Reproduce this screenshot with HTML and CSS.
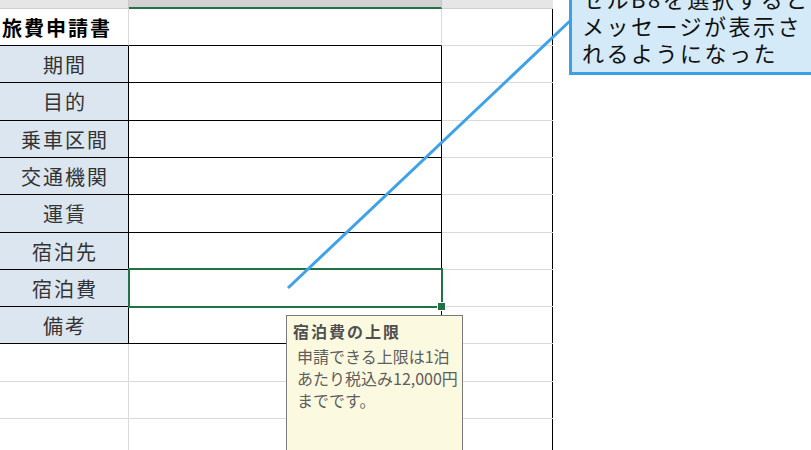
FILE: index.html
```html
<!DOCTYPE html>
<html lang="ja">
<head>
<meta charset="utf-8">
<title>旅費申請書</title>
<link rel="stylesheet" href="styles.css">
</head>
<body>
<div class="page">
  <div class="sheet">
    <div class="hdr h-a"></div><div class="hdr h-b"></div><div class="hdr h-c"></div>

    <div class="cell title">旅費申請書</div><div class="cell top-b"></div><div class="cell gc"></div>
    <div class="cell lbl">期間</div><div class="cell val"></div><div class="cell gc"></div>
    <div class="cell lbl">目的</div><div class="cell val"></div><div class="cell gc"></div>
    <div class="cell lbl">乗車区間</div><div class="cell val"></div><div class="cell gc"></div>
    <div class="cell lbl">交通機関</div><div class="cell val"></div><div class="cell gc"></div>
    <div class="cell lbl">運賃</div><div class="cell val"></div><div class="cell gc"></div>
    <div class="cell lbl">宿泊先</div><div class="cell val"></div><div class="cell gc"></div>
    <div class="cell lbl">宿泊費</div><div class="cell val"></div><div class="cell gc"></div>
    <div class="cell lbl">備考</div><div class="cell val"></div><div class="cell gc"></div>
    <div class="cell"></div><div class="cell"></div><div class="cell gc"></div>
    <div class="cell"></div><div class="cell"></div><div class="cell gc"></div>
    <div class="cell"></div><div class="cell"></div><div class="cell gc"></div>
  </div>

  <div class="selection"></div>
  <div class="handle"></div>

  <svg class="pointer" width="811" height="450" viewBox="0 0 811 450" xmlns="http://www.w3.org/2000/svg">
    <line x1="288" y1="288" x2="572" y2="19" stroke="#3fa2e8" stroke-width="3"/>
  </svg>

  <div class="callout">
    <div>セルB8を選択すると</div>
    <div>メッセージが表示さ</div>
    <div>れるようになった</div>
  </div>

  <div class="tip">
    <div class="tip-title">宿泊費の上限</div>
    <div class="tip-body">
      <div>申請できる上限は1泊</div>
      <div>あたり税込み12,000円</div>
      <div>までです。</div>
    </div>
  </div>
</div>
</body>
</html>
```

FILE: styles.css
```css
html, body {
  margin: 0;
  padding: 0;
  background: #ffffff;
}

body {
  font-family: "Noto Sans CJK JP", "Noto Sans", sans-serif;
  width: 811px;
  height: 450px;
  overflow: hidden;
}

.page {
  position: relative;
  width: 811px;
  height: 450px;
  overflow: hidden;
}

.sheet {
  display: grid;
  grid-template-columns: 129px 313px 111px;
  grid-template-rows: 9px 37px 37px 38px 37px 37px 38px 37px 37px 37px 38px 37px 37px;
  width: 553px;
  box-sizing: border-box;
  border-right: 1px solid #000000;
}

.hdr {
  box-sizing: border-box;
  border-right: 1px solid #c6c6c6;
  border-bottom: 1px solid #cfcfcf;
  background: #e6e6e6;
}

.h-b {
  background: #d2d2d2;
  border-bottom: 2px solid #217346;
}

.h-c {
  border-right: none;
}

.cell {
  box-sizing: border-box;
  border-right: 1px solid #dadada;
  border-bottom: 1px solid #dadada;
  font-size: 20px;
  color: #333333;
  display: flex;
  align-items: center;
}

.gc {
  border-right: none;
}

.title {
  font-weight: bold;
  color: #000000;
  letter-spacing: 2px;
  padding-left: 2px;
  border-bottom-color: #000000;
  white-space: nowrap;
}

.top-b {
  border-bottom-color: #000000;
}

.lbl {
  background: #dce6f1;
  border-right-color: #000000;
  border-bottom-color: #000000;
  justify-content: center;
  letter-spacing: 2px;
  padding-left: 2px;
}

.val {
  border-right-color: #000000;
  border-bottom-color: #000000;
}

.selection {
  position: absolute;
  left: 128px;
  top: 268px;
  width: 315px;
  height: 40px;
  box-sizing: border-box;
  border: 2px solid #217346;
}

.handle {
  position: absolute;
  left: 437px;
  top: 302px;
  width: 7px;
  height: 7px;
  background: #217346;
  border: 1px solid #ffffff;
}

.pointer {
  position: absolute;
  left: 0;
  top: 0;
}

.callout {
  position: absolute;
  left: 569px;
  top: -22px;
  width: 280px;
  box-sizing: border-box;
  border: 3px solid #3d9fe4;
  background: #d4eaf9;
  padding: 4px 0 6px 10px;
  font-size: 22px;
  line-height: 27px;
  letter-spacing: 2.5px;
  color: #111111;
  white-space: nowrap;
}

.tip {
  position: absolute;
  left: 286px;
  top: 315px;
  width: 177px;
  height: 150px;
  box-sizing: border-box;
  border: 1px solid #7a7a7a;
  background: #fbfae0;
  padding: 4px 0 0 6px;
  white-space: nowrap;
}

.tip-title {
  font-size: 16px;
  line-height: 23px;
  font-weight: bold;
  color: #505050;
  letter-spacing: 2px;
}

.tip-body {
  margin-top: 2px;
  padding-left: 4px;
  font-size: 16px;
  line-height: 22px;
  color: #5e5e5e;
}
```
